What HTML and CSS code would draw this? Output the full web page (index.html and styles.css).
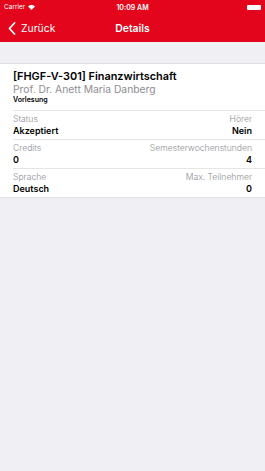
FILE: index.html
```html
<!DOCTYPE html>
<html lang="de">
<head>
    <meta charset="UTF-8">
    <meta name="viewport" content="width=device-width, initial-scale=1.0">
    <title>Details</title>
    <link rel="stylesheet" href="styles.css">
</head>
<body>
    <div class="top">
        <div class="status-bar">
            <span class="carrier">Carrier
                <svg class="wifi" width="7" height="5" viewBox="0 0 14 10">
                    <path d="M7 10 L0 3 A10 10 0 0 1 14 3 Z" fill="#fff"/>
                </svg>
            </span>
            <span class="time">10:09 AM</span>
            <span class="battery"><span class="battery-level"></span></span>
        </div>
        <div class="nav-bar">
            <a class="back" href="#">
                <svg width="8" height="13" viewBox="0 0 8 13">
                    <path d="M6.5 1 L1.5 6.5 L6.5 12" fill="none" stroke="#fff" stroke-width="1.8" stroke-linecap="round" stroke-linejoin="round"/>
                </svg>
                Zurück
            </a>
            <span class="nav-title">Details</span>
        </div>
    </div>

    <div class="card">
        <div class="head">
            <div class="course">[FHGF-V-301] Finanzwirtschaft</div>
            <div class="lecturer">Prof. Dr. Anett Maria Danberg</div>
            <div class="kind">Vorlesung</div>
        </div>
        <div class="row">
            <div class="cell">
                <span class="label">Status</span>
                <span class="value">Akzeptiert</span>
            </div>
            <div class="cell right">
                <span class="label">Hörer</span>
                <span class="value">Nein</span>
            </div>
        </div>
        <div class="row">
            <div class="cell">
                <span class="label">Credits</span>
                <span class="value">0</span>
            </div>
            <div class="cell right">
                <span class="label">Semesterwochenstunden</span>
                <span class="value">4</span>
            </div>
        </div>
        <div class="row">
            <div class="cell">
                <span class="label">Sprache</span>
                <span class="value">Deutsch</span>
            </div>
            <div class="cell right">
                <span class="label">Max. Teilnehmer</span>
                <span class="value">0</span>
            </div>
        </div>
    </div>
</body>
</html>
```

FILE: styles.css
```css
body {
    font-family: Inter, "Liberation Sans", sans-serif;
    background-color: #efeff4;
    margin: 0;
    color: #000;
}
.top {
    background-color: #e3051b;
    color: white;
}
.status-bar {
    height: 14px;
    display: flex;
    align-items: center;
    justify-content: space-between;
    padding: 0 4px;
    font-size: 6.5px;
}
.carrier {
    display: flex;
    align-items: center;
    gap: 3px;
    width: 60px;
}
.time {
    font-weight: 600;
    font-size: 7px;
}
.battery {
    width: 60px;
    display: flex;
    justify-content: flex-end;
}
.battery-level {
    width: 14px;
    height: 5px;
    background: white;
    border-radius: 1px;
}
.nav-bar {
    height: 28px;
    display: flex;
    align-items: center;
    position: relative;
}
.back {
    display: flex;
    align-items: center;
    gap: 5px;
    padding-left: 8px;
    color: white;
    text-decoration: none;
    font-size: 10.4px;
}
.nav-title {
    position: absolute;
    left: 0;
    right: 0;
    text-align: center;
    font-weight: 600;
    font-size: 10.4px;
    pointer-events: none;
}
.card {
    background: white;
    margin-top: 21px;
    padding-left: 13px;
    border-top: 1px solid #e0e0e4;
    border-bottom: 1px solid #e0e0e4;
}
.head {
    padding: 5px 13px 5px 0;
    border-bottom: 1px solid #e6e6e6;
}
.course {
    font-weight: 600;
    font-size: 10.9px;
    line-height: 15px;
}
.lecturer {
    font-size: 10.3px;
    color: #8e8e93;
    line-height: 11px;
}
.kind {
    font-weight: 600;
    font-size: 7px;
    line-height: 10px;
}
.row {
    display: flex;
    justify-content: space-between;
    padding: 3px 13px 2px 0;
    border-bottom: 1px solid #e6e6e6;
}
.row:last-child {
    border-bottom: none;
}
.cell {
    display: flex;
    flex-direction: column;
}
.cell.right {
    align-items: flex-end;
}
.label {
    font-size: 8.6px;
    font-weight: 300;
    color: #8e8e93;
    line-height: 11px;
}
.value {
    font-weight: 600;
    font-size: 9px;
    line-height: 12px;
}
```
